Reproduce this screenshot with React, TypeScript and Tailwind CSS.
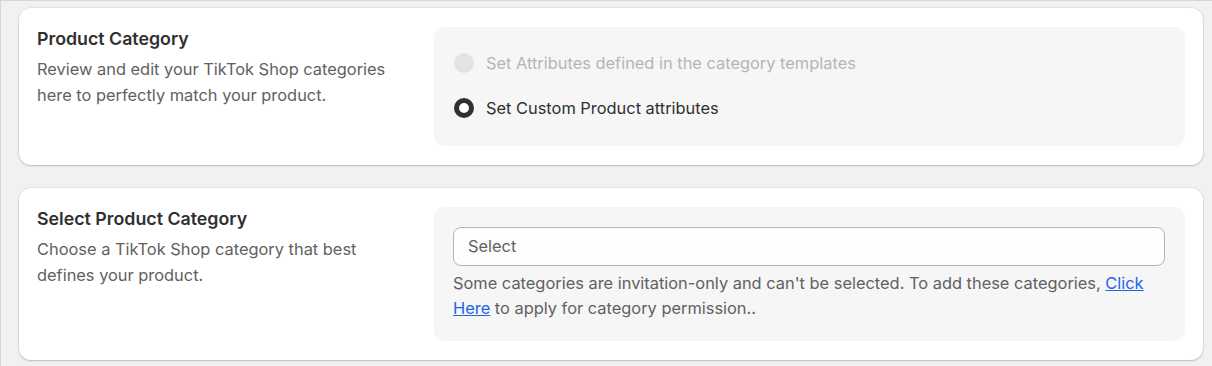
import React from "react";

const Radio = ({ checked, disabled, label }: { checked?: boolean; disabled?: boolean; label: string }) => (
  <label className="flex h-8 items-center gap-3">
    {disabled ? (
      <span className="h-5 w-5 rounded-full bg-[#e3e3e3]" />
    ) : (
      <span
        className={
          checked
            ? "h-5 w-5 rounded-full border-[5px] border-[#303030] bg-white"
            : "h-5 w-5 rounded-full border-2 border-[#8a8a8a] bg-white"
        }
      />
    )}
    <span className={disabled ? "text-[#b5b5b5]" : "text-[#303030]"}>{label}</span>
  </label>
);

const Section = ({
  title,
  text,
  children,
}: {
  title: string;
  text: React.ReactNode;
  children: React.ReactNode;
}) => (
  <section className="flex rounded-xl bg-white px-[18px] py-[19px] shadow-[0_1px_2px_rgba(0,0,0,0.18),0_0_0_1px_rgba(0,0,0,0.05)]">
    <div className="w-[397px] shrink-0 pr-5">
      <h2 className="text-[17.8px] leading-6 font-semibold text-[#303030]">{title}</h2>
      <p className="mt-[5px] leading-[26px] text-[#616161]">{text}</p>
    </div>
    <div className="flex-1 rounded-[10px] bg-[#f6f6f6] px-5 pt-5 pb-[20px]">{children}</div>
  </section>
);

export default function App() {
  return (
    <main className="min-h-screen border-t border-l border-[#d6d6d6] bg-[#f1f1f1] pt-[7px] pr-[9px] pl-[18px] font-['Inter',sans-serif] text-[16.4px]">
      <div className="flex flex-col gap-[23px]">
        <Section
          title="Product Category"
          text={
            <>
              Review and edit your TikTok Shop categories
              <br />
              here to perfectly match your product.
            </>
          }
        >
          <div className="flex flex-col gap-[13px] pb-[2px]">
            <Radio disabled label="Set Attributes defined in the category templates" />
            <Radio checked label="Set Custom Product attributes" />
          </div>
        </Section>
        <Section
          title="Select Product Category"
          text={
            <>
              Choose a TikTok Shop category that best
              <br />
              defines your product.
            </>
          }
        >
          <div className="-ml-px">
            <div className="flex h-[39px] items-center rounded-lg border border-[#b5b5b5] bg-[#fdfdfd] px-[14px] text-[#616161]">
              Select
            </div>
            <p className="mt-[5px] leading-[25px] text-[#616161]">
              Some categories are invitation-only and can't be selected. To add these categories,{" "}
              <a href="#" className="text-[#2463eb] underline">
                Click
              </a>
              <br />
              <a href="#" className="text-[#2463eb] underline">
                Here
              </a>{" "}
              to apply for category permission..
            </p>
          </div>
        </Section>
      </div>
    </main>
  );
}
